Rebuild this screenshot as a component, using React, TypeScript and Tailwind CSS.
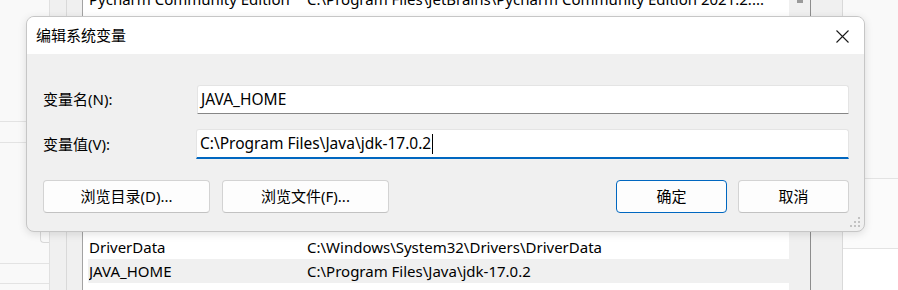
import React from "react";

const font = { fontFamily: "'Noto Sans', 'Noto Sans CJK SC', sans-serif" };

function Row({ name, value, hl }: { name: string; value: string; hl?: boolean }) {
  return (
    <div className={`ml-[5px] pl-[1px] h-[24px] flex items-center shrink-0 text-[15px] text-black ${hl ? "bg-[#f0f0f0]" : ""}`}>
      <div className="w-[218px] whitespace-nowrap overflow-hidden">{name}</div>
      <div className="whitespace-nowrap overflow-hidden">{value}</div>
    </div>
  );
}

function Btn({ children, primary, w }: { children: React.ReactNode; primary?: boolean; w: string }) {
  return (
    <div
      className={`${w} h-[33px] flex items-center justify-center rounded-[4px] bg-[#fdfdfd] text-[15px] text-black border ${
        primary ? "border-[#0067c0]" : "border-[#d3d3d3] border-b-[#c2c2c2]"
      }`}
    >
      {children}
    </div>
  );
}

export default function App() {
  return (
    <div className="relative w-[898px] h-[290px] overflow-hidden bg-white" style={font}>
      {/* background window */}
      <div className="flex h-[290px]">
        <div className="w-[50px] bg-[#f9f9f9] border-r border-[#e0e0e0] flex flex-col">
          <div className="h-[122px] border-b border-[#e3e3e3]" />
          <div className="h-[21px] border-b border-[#e3e3e3]" />
          <div className="h-[88px]" />
          <div className="h-[12px] flex">
            <div className="w-[40px]" />
            <div className="flex-1 border-l border-b border-[#d8d8d8] rounded-bl-[4px]" />
          </div>
          <div className="h-[21px] border-b border-[#e3e3e3]" />
          <div className="h-[20px] border-b border-[#e3e3e3]" />
        </div>
        <div className="w-[17px] bg-[#f0f0f0] border-r border-[#d9d9d9]" />
        <div className="w-[16px] bg-[#f0f0f0] border-r border-[#a3a3a3]" />
        <div className="w-[706px] bg-white flex flex-col overflow-hidden">
          <div className="-mt-[13px]" />
          <Row name="Pycharm Community Edition" value="C:\Program Files\JetBrains\Pycharm Community Edition 2021.2...." />
          <Row name="TEMP" value="%USERPROFILE%\AppData\Local\Temp" />
          <div className="h-[200px] shrink-0" />
          <Row name="DriverData" value="C:\Windows\System32\Drivers\DriverData" />
          <Row name="JAVA_HOME" value="C:\Program Files\Java\jdk-17.0.2" hl />
          <Row name="lambda_home" value="%USERPROFILE%\AppData\Local\Temp\lib" />
        </div>
        <div className="w-[22px] bg-[#f0f0f0] border-r border-[#8d8d8d] flex justify-center">
          <div className="w-[6px] h-[3px] bg-[#9a9a9a]" />
        </div>
        <div className="w-[32px] bg-[#f0f0f0] border-r border-[#d9d9d9]" />
        <div className="flex-1 bg-[#f9f9f9] flex flex-col">
          <div className="h-[179px] border-b border-[#e3e3e3]" />
          <div className="h-[70px] bg-[#fbfbfb] border-b border-[#e3e3e3]" />
          <div className="flex-1 bg-white" />
        </div>
      </div>

      {/* dialog */}
      <div className="absolute left-[26px] top-[16px] w-[839px] h-[216px] rounded-[8px] border border-[#c6c6c6] bg-[#f0f0f0] overflow-hidden shadow-[0_2px_8px_rgba(0,0,0,0.12)] flex flex-col">
        <div className="h-[37px] bg-white flex items-center justify-between pl-[9px] pr-[15px] shrink-0">
          <span className="text-[15px] text-black leading-none">编辑系统变量</span>
          <svg width="13" height="13" viewBox="0 0 13 13" className="mt-[1px]">
            <path d="M0.5 0.5 L12.5 12.5 M12.5 0.5 L0.5 12.5" stroke="#1a1a1a" strokeWidth="1.1" />
          </svg>
        </div>
        <div className="relative flex-1 pt-[31px] pl-[16px] pr-[15px] flex flex-col">
          <div className="flex items-center">
            <div className="w-[154px] text-[15px] text-black">变量名(N):</div>
            <div className="flex-1 h-[29px] bg-white border border-[#e4e4e4] border-b-[#868686] rounded-t-[3px] flex items-center pl-[3px] text-[15.5px] text-black">
              JAVA_HOME
            </div>
          </div>
          <div className="flex items-center mt-[15px]">
            <div className="w-[153px] text-[15px] text-black">变量值(V):</div>
            <div className="flex-1 h-[30px] bg-white border border-[#e4e4e4] border-b-2 border-b-[#0067c0] rounded-t-[3px] flex items-center pl-[3px] text-[15.5px] text-black">
              <span>C:\Program Files\Java\jdk-17.0.2</span>
              <span className="inline-block w-[1px] h-[20px] bg-black ml-[1px]" />
            </div>
          </div>
          <div className="flex items-center mt-[21px]">
            <Btn w="w-[167px]">浏览目录(D)...</Btn>
            <div className="w-[12px]" />
            <Btn w="w-[167px]">浏览文件(F)...</Btn>
            <div className="flex-1" />
            <Btn w="w-[111px]" primary>
              确定
            </Btn>
            <div className="w-[11px]" />
            <Btn w="w-[111px]">取消</Btn>
          </div>
          <svg width="12" height="12" viewBox="0 0 12 12" className="absolute right-[2px] bottom-[2px]">
            <g fill="#c2c2c2">
              <rect x="8" y="0" width="2" height="2" />
              <rect x="4" y="4" width="2" height="2" />
              <rect x="8" y="4" width="2" height="2" />
              <rect x="0" y="8" width="2" height="2" />
              <rect x="4" y="8" width="2" height="2" />
              <rect x="8" y="8" width="2" height="2" />
            </g>
          </svg>
        </div>
      </div>
    </div>
  );
}
